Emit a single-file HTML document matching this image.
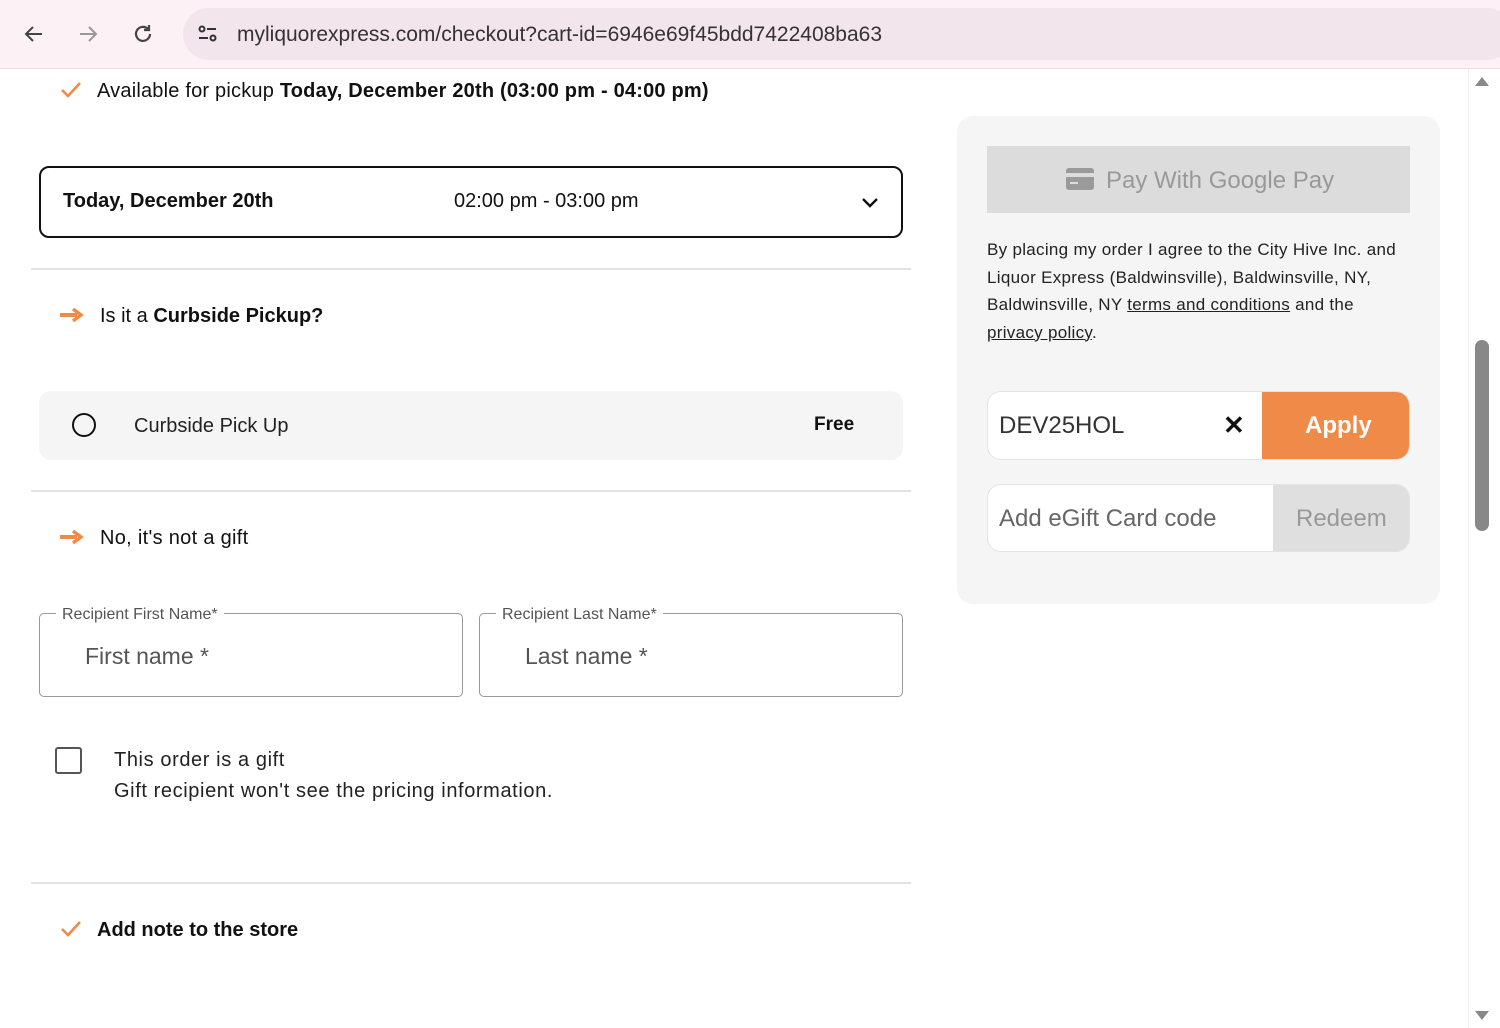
<!DOCTYPE html>
<html><head><style>
*{box-sizing:border-box;margin:0;padding:0}
body{width:1500px;height:1028px;overflow:hidden;background:#fff;font-family:"Liberation Sans",Arial,sans-serif;color:#111;position:relative}
.abs{position:absolute}
.top{left:0;top:0;width:1500px;height:69px;background:#fcf1f4;border-bottom:1px solid #ecdfe3}
.url{left:183px;top:8px;width:1330px;height:52px;border-radius:26px;background:#f2e5ec}
.hr{height:2px;background:#e2e2e2;left:31px;width:880px}
.arrow{width:24px;height:14px}
.t20{font-size:20px}
</style></head><body>
<div class="abs top"></div>
<svg class="abs" style="left:22px;top:22px" width="24" height="24" viewBox="0 0 24 24"><path d="M20 12H5M11 5l-7 7 7 7" stroke="#444" stroke-width="2" fill="none"/></svg>
<svg class="abs" style="left:76px;top:22px" width="24" height="24" viewBox="0 0 24 24"><path d="M4 12h15M13 5l7 7-7 7" stroke="#999" stroke-width="2" fill="none"/></svg>
<svg class="abs" style="left:131px;top:22px" width="24" height="24" viewBox="0 0 24 24"><path d="M19 12a7 7 0 1 1-2-5" stroke="#444" stroke-width="2.2" fill="none"/><path d="M18 3v5h-5" stroke="#444" stroke-width="2.2" fill="none"/></svg>
<div class="abs url"></div>
<svg class="abs" style="left:196px;top:22px" width="24" height="24" viewBox="0 0 24 24"><circle cx="6" cy="7" r="2.5" stroke="#333" stroke-width="2" fill="none"/><path d="M11 7h9M3 16h9" stroke="#333" stroke-width="2"/><circle cx="17" cy="16" r="2.5" stroke="#333" stroke-width="2" fill="none"/></svg>
<div class="abs" style="left:237px;top:23px;font-size:21px;color:#333">myliquorexpress.com/checkout?cart-id=6946e69f45bdd7422408ba63</div>

<svg class="abs" style="left:60px;top:81px" width="22" height="18" viewBox="0 0 22 18"><path d="M2 9l6 6L20 2" stroke="#f08a48" stroke-width="2.6" fill="none"/></svg>
<div class="abs t20" style="left:97px;top:80px;letter-spacing:0.2px">Available for pickup <b>Today, December 20th (03:00 pm - 04:00 pm)</b></div>

<div class="abs" style="left:39px;top:166px;width:864px;height:72px;border:2px solid #111;border-radius:10px"></div>
<div class="abs t20" style="left:63px;top:190px;font-weight:bold">Today, December 20th</div>
<div class="abs t20" style="left:454px;top:190px">02:00 pm - 03:00 pm</div>
<svg class="abs" style="left:860px;top:195px" width="20" height="14" viewBox="0 0 20 14"><path d="M3 4l7 7 7-7" stroke="#111" stroke-width="2.4" fill="none"/></svg>
<div class="abs hr" style="top:268px"></div>

<svg class="abs arrow" style="left:60px;top:308px" viewBox="0 0 24 14"><path d="M0 7h17" stroke="#f08a48" stroke-width="4"/><path d="M13 1l8 6-8 6" stroke="#f08a48" stroke-width="3.4" fill="none"/></svg>
<div class="abs t20" style="left:100px;top:305px">Is it a <b>Curbside Pickup?</b></div>

<div class="abs" style="left:39px;top:391px;width:864px;height:69px;background:#f5f5f5;border-radius:12px"></div>
<div class="abs" style="left:72px;top:413px;width:24px;height:24px;border:2.5px solid #111;border-radius:50%"></div>
<div class="abs t20" style="left:134px;top:415px;color:#222">Curbside Pick Up</div>
<div class="abs t20" style="left:814px;top:414px;font-weight:bold;font-size:19px">Free</div>
<div class="abs hr" style="top:490px"></div>

<svg class="abs arrow" style="left:60px;top:530px" viewBox="0 0 24 14"><path d="M0 7h17" stroke="#f08a48" stroke-width="4"/><path d="M13 1l8 6-8 6" stroke="#f08a48" stroke-width="3.4" fill="none"/></svg>
<div class="abs t20" style="left:100px;top:527px;letter-spacing:0.3px">No, it's not a gift</div>

<div class="abs" style="left:39px;top:613px;width:424px;height:84px;border:1.5px solid #999;border-radius:5px"></div>
<div class="abs" style="left:56px;top:606px;background:#fff;padding:0 6px;font-size:16px;color:#555">Recipient First Name*</div>
<div class="abs" style="left:85px;top:643px;font-size:23px;color:#555">First name *</div>
<div class="abs" style="left:479px;top:613px;width:424px;height:84px;border:1.5px solid #999;border-radius:5px"></div>
<div class="abs" style="left:496px;top:606px;background:#fff;padding:0 6px;font-size:16px;color:#555">Recipient Last Name*</div>
<div class="abs" style="left:525px;top:643px;font-size:23px;color:#555">Last name *</div>

<div class="abs" style="left:55px;top:747px;width:27px;height:27px;border:2.5px solid #555;border-radius:3px"></div>
<div class="abs t20" style="left:114px;top:749px;color:#222;letter-spacing:0.6px">This order is a gift</div>
<div class="abs t20" style="left:114px;top:780px;color:#222;letter-spacing:0.6px">Gift recipient won't see the pricing information.</div>
<div class="abs hr" style="top:882px"></div>
<svg class="abs" style="left:60px;top:920px" width="22" height="18" viewBox="0 0 22 18"><path d="M2 9l6 6L20 2" stroke="#f08a48" stroke-width="2.6" fill="none"/></svg>
<div class="abs t20" style="left:97px;top:919px;font-weight:bold">Add note to the store</div>

<div class="abs" style="left:957px;top:116px;width:483px;height:488px;background:#f5f5f5;border-radius:16px"></div>
<div class="abs" style="left:987px;top:146px;width:423px;height:67px;background:#dcdcdc"></div>
<svg class="abs" style="left:1066px;top:168px" width="28" height="22" viewBox="0 0 28 22"><rect x="0" y="0" width="28" height="22" rx="3" fill="#9a9a9a"/><rect x="0" y="5" width="28" height="4" fill="#dcdcdc"/><rect x="4" y="14" width="8" height="2" fill="#dcdcdc"/></svg>
<div class="abs" style="left:1106px;top:167px;font-size:24px;color:#999">Pay With Google Pay</div>
<div class="abs" style="left:987px;top:236px;width:418px;font-size:17px;line-height:27.5px;color:#222;letter-spacing:0.3px">By placing my order I agree to the City Hive Inc. and Liquor Express (Baldwinsville), Baldwinsville, NY, Baldwinsville, NY <u>terms and conditions</u> and the <u>privacy policy</u>.</div>

<div class="abs" style="left:987px;top:391px;width:423px;height:69px;background:#fff;border:1px solid #e3e3e3;border-radius:14px;overflow:hidden">
<div class="abs" style="left:274px;top:-1px;width:149px;height:70px;background:#f08a48"></div></div>
<div class="abs" style="left:999px;top:412px;font-size:24px;color:#333">DEV25HOL</div>
<div class="abs" style="left:1223px;top:410px;font-size:26px;font-weight:bold">✕</div>
<div class="abs" style="left:1305px;top:412px;font-size:24px;color:#fff;font-weight:bold">Apply</div>

<div class="abs" style="left:987px;top:484px;width:423px;height:68px;background:#fff;border:1px solid #e3e3e3;border-radius:14px;overflow:hidden">
<div class="abs" style="left:285px;top:-1px;width:138px;height:70px;background:#dfdfdf"></div></div>
<div class="abs" style="left:999px;top:505px;font-size:24px;color:#666">Add eGift Card code</div>
<div class="abs" style="left:1296px;top:505px;font-size:24px;color:#999">Redeem</div>

<div class="abs" style="left:1468px;top:69px;width:32px;height:959px;background:#fff;border-left:1px solid #eee"></div>
<div class="abs" style="left:1475px;top:77px;width:0;height:0;border-left:7px solid transparent;border-right:7px solid transparent;border-bottom:9px solid #888"></div>
<div class="abs" style="left:1475px;top:340px;width:14px;height:191px;background:#888;border-radius:7px"></div>
<div class="abs" style="left:1475px;top:1011px;width:0;height:0;border-left:7px solid transparent;border-right:7px solid transparent;border-top:9px solid #888"></div>
</body></html>
